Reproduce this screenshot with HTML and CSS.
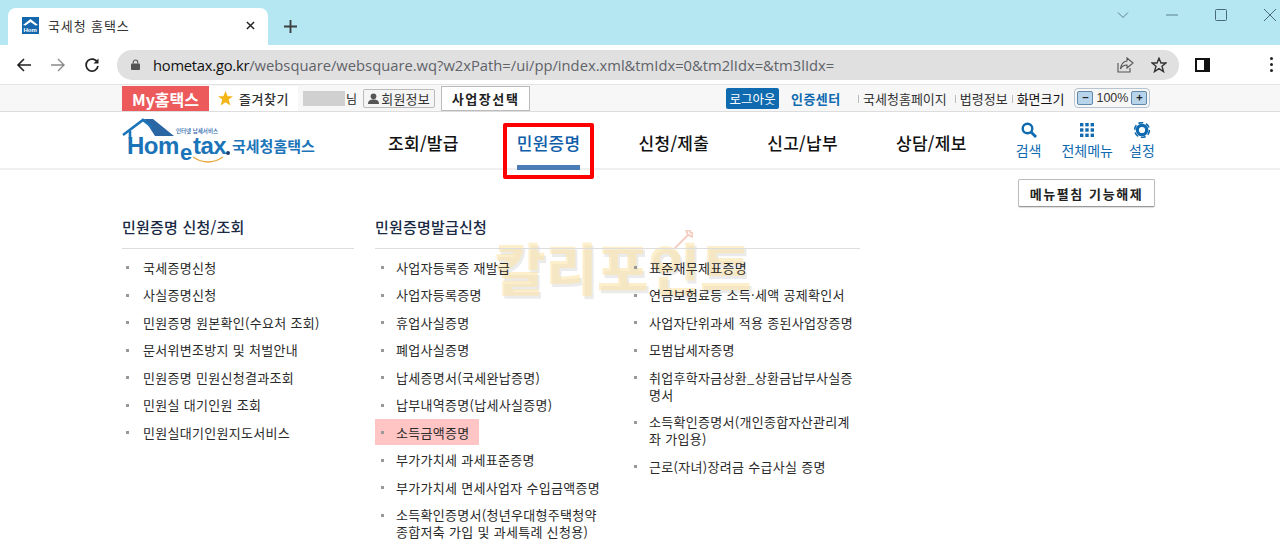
FILE: index.html
```html
<!DOCTYPE html>
<html lang="ko">
<head>
<meta charset="utf-8">
<title>국세청 홈택스</title>
<link rel="stylesheet" href="styles.css">
</head>
<body>
<div class="tabstrip">
  <div class="tab">
    <svg class="favicon" viewBox="0 0 17 17"><rect width="17" height="17" fill="#1467ad"/><path d="M1 8 8.5 2 16 8 13.5 8.5 8.5 5 3.5 8.5Z" fill="#fff"/><text x="1.5" y="14.5" class="fav-text">Hom</text></svg>
    <span class="tab-title">국세청 홈택스</span>
    <svg class="tab-close" viewBox="0 0 10 10"><path d="M1 1 9 9M9 1 1 9" stroke="#222" stroke-width="1.6"/></svg>
  </div>
  <svg class="tab-new" viewBox="0 0 14 14"><path d="M7 0V14M0 7H14" stroke="#3c4043" stroke-width="2"/></svg>
  <div class="win-controls">
    <svg class="win-ico" viewBox="0 0 12 12"><path d="M1 3.5 6 8.5 11 3.5" fill="none" stroke="#5f7f8c"/></svg>
    <svg class="win-ico" viewBox="0 0 12 12"><path d="M0 6H12" stroke="#5f7f8c"/></svg>
    <svg class="win-ico" viewBox="0 0 12 12"><rect x=".5" y=".5" width="11" height="11" rx="1" fill="none" stroke="#4a6a78"/></svg>
    <svg class="win-ico" viewBox="0 0 12 12"><path d="M0 0 12 12M12 0 0 12" stroke="#4a6a78"/></svg>
  </div>
</div>
<div class="toolbar">
  <svg class="tb-ico back" viewBox="0 0 16 16"><path d="M15 8H2M8 2 2 8 8 14" fill="none" stroke="#222" stroke-width="1.6"/></svg>
  <svg class="tb-ico fwd" viewBox="0 0 16 16"><path d="M1 8H14M8 2 14 8 8 14" fill="none" stroke="#8a8a8a" stroke-width="1.4"/></svg>
  <svg class="tb-ico reload" viewBox="0 0 16 16"><path d="M13.5 5.5A6 6 0 1 0 14 9" fill="none" stroke="#222" stroke-width="1.7"/><path d="M14.5 1.5V6.5H9.5Z" fill="#222"/></svg>
  <div class="omnibox">
    <svg class="lock" viewBox="0 0 10 12"><path d="M2.5 5V3.5a2.5 2.5 0 0 1 5 0V5" fill="none" stroke="#555" stroke-width="1.2"/><rect y="5" width="10" height="7" rx="1" fill="#555"/></svg>
    <span class="url"><span class="url-host">hometax.go.kr</span>/websquare/websquare.wq?w2xPath=/ui/pp/index.xml&amp;tmIdx=0&amp;tm2lIdx=&amp;tm3lIdx=</span>
    <svg class="share" viewBox="0 0 17 16"><path d="M1 6V15H13V11" fill="none" stroke="#555" stroke-width="1.1"/><path d="M10 1 16 6 10 11V8C7 8 5 9 3.5 12 4 8 6 4.5 10 4Z" fill="none" stroke="#555" stroke-width="1.1"/></svg>
    <svg class="star-o" viewBox="0 0 16 16"><path d="M8 1.2 10 6H15L11 9.2 12.5 14.6 8 11.6 3.5 14.6 5 9.2 1 6H6Z" fill="none" stroke="#333" stroke-width="1.4"/></svg>
  </div>
  <svg class="panel" viewBox="0 0 15 14"><rect x="1" y="1" width="13" height="12" fill="#fff" stroke="#111" stroke-width="2"/><rect x="9" y="1" width="5" height="12" fill="#111"/></svg>
  <div class="dots"><i></i><i></i><i></i></div>
</div>

<div class="page">
  <div class="topbar">
    <div class="my-tab">My홈택스</div>
    <div class="fav-tab"><svg class="fav-star" viewBox="0 0 14 14"><path d="M7 0 9 5H14L10 8 11.5 13.5 7 10.4 2.5 13.5 4 8 0 5H5Z" fill="#f5b417"/></svg>즐겨찾기</div>
    <div class="masked"></div>
    <span class="sir">님</span>
    <div class="member-btn"><svg class="person" viewBox="0 0 10 10"><circle cx="5" cy="3" r="2.6" fill="#555"/><path d="M0 10C0 7 2 6 5 6S10 7 10 10Z" fill="#555"/></svg>회원정보</div>
    <div class="biz-btn">사업장선택</div>
    <div class="logout">로그아웃</div>
    <a class="cert">인증센터</a>
    <span class="tlink first">국세청홈페이지</span>
    <span class="tlink">법령정보</span>
    <span class="tlink dark">화면크기</span>
    <div class="zoomer"><span class="zbtn">−</span><span class="zval">100%</span><span class="zbtn">+</span></div>
  </div>

  <header class="header">
    <svg class="logo" viewBox="0 0 200 56" aria-label="Hometax">
      <path d="M22 6H31L52 23H33Z" fill="#2a66a4"/>
      <path d="M1 22 21 7 30 14" fill="none" stroke="#1b74b8" stroke-width="2.6"/>
      <path d="M8 18V26" stroke="#1b74b8" stroke-width="2.6"/>
      <text x="54" y="20" class="logo-sub">인터넷 납세서비스</text>
      <text x="5" y="41" class="logo-main">Hom</text>
      <text x="58" y="47" class="logo-e">e</text>
      <text x="71" y="41" class="logo-main">tax</text>
      <circle cx="106" cy="40" r="2" fill="#1a3d73"/>
      <path d="M71 44Q86 54 101 44" fill="none" stroke="#e5a63a" stroke-width="1.3"/>
      <text x="110" y="39" class="logo-ko">국세청홈택스</text>
    </svg>
    <nav class="nav">
      <span class="nav-item">조회/발급</span>
      <span class="nav-item active">민원증명<i class="red-box"></i></span>
      <span class="nav-item">신청/제출</span>
      <span class="nav-item">신고/납부</span>
      <span class="nav-item">상담/제보</span>
    </nav>
    <div class="tools">
      <div class="tool t1">
        <svg class="tool-ico" viewBox="0 0 16 16"><circle cx="6.5" cy="6.5" r="4.8" fill="none" stroke="#0f6ab0" stroke-width="2.4"/><path d="M10 10 15 15" stroke="#0f6ab0" stroke-width="2.8"/></svg>
        <span>검색</span>
      </div>
      <div class="tool t2">
        <svg class="tool-ico" viewBox="0 0 16 16" fill="#0f6ab0"><rect x="1" y="1" width="3.4" height="3.4"/><rect x="6.3" y="1" width="3.4" height="3.4"/><rect x="11.6" y="1" width="3.4" height="3.4"/><rect x="1" y="6.3" width="3.4" height="3.4"/><rect x="6.3" y="6.3" width="3.4" height="3.4"/><rect x="11.6" y="6.3" width="3.4" height="3.4"/><rect x="1" y="11.6" width="3.4" height="3.4"/><rect x="6.3" y="11.6" width="3.4" height="3.4"/><rect x="11.6" y="11.6" width="3.4" height="3.4"/></svg>
        <span>전체메뉴</span>
      </div>
      <div class="tool t3">
        <svg class="tool-ico" viewBox="0 0 16 16"><circle cx="8" cy="8" r="7.4" fill="none" stroke="#0f6ab0" stroke-width="1.6" stroke-dasharray="5 2.75"/><circle cx="8" cy="8" r="4.7" fill="none" stroke="#0f6ab0" stroke-width="3.2"/></svg>
        <span>설정</span>
      </div>
    </div>
  </header>

  <main class="content">
    <div class="watermark">칼리포인트
      <svg class="wm-arrow" viewBox="0 0 24 24"><path d="M2 22 18 6M18 6 16 1 20 0 21 3 24 4 23 8 18 6Z" fill="none" stroke="#f3b9a8" stroke-width="2.4"/></svg>
    </div>
    <div class="action-row"><div class="collapse-btn">메뉴펼침 기능해제</div></div>
    <div class="menus">
      <section class="menu col-a">
        <h2 class="menu-title">민원증명 신청/조회</h2>
        <ul class="list">
          <li class="row"><span>국세증명신청</span></li>
          <li class="row"><span>사실증명신청</span></li>
          <li class="row"><span>민원증명 원본확인(수요처 조회)</span></li>
          <li class="row"><span>문서위변조방지 및 처벌안내</span></li>
          <li class="row"><span>민원증명 민원신청결과조회</span></li>
          <li class="row"><span>민원실 대기인원 조회</span></li>
          <li class="row"><span>민원실대기인원지도서비스</span></li>
        </ul>
      </section>
      <section class="menu col-b">
        <h2 class="menu-title">민원증명발급신청</h2>
        <div class="split">
          <ul class="list sub">
            <li class="row"><span>사업자등록증 재발급</span></li>
            <li class="row"><span>사업자등록증명</span></li>
            <li class="row"><span>휴업사실증명</span></li>
            <li class="row"><span>폐업사실증명</span></li>
            <li class="row"><span>납세증명서(국세완납증명)</span></li>
            <li class="row"><span>납부내역증명(납세사실증명)</span></li>
            <li class="row hl"><span>소득금액증명</span></li>
            <li class="row"><span>부가가치세 과세표준증명</span></li>
            <li class="row"><span>부가가치세 면세사업자 수입금액증명</span></li>
            <li class="row"><span>소득확인증명서(청년우대형주택청약<br>종합저축 가입 및 과세특례 신청용)</span></li>
          </ul>
          <ul class="list sub">
            <li class="row"><span>표준재무제표증명</span></li>
            <li class="row"><span>연금보험료등 소득·세액 공제확인서</span></li>
            <li class="row"><span>사업자단위과세 적용 종된사업장증명</span></li>
            <li class="row"><span>모범납세자증명</span></li>
            <li class="row"><span>취업후학자금상환_상환금납부사실증<br>명서</span></li>
            <li class="row"><span>소득확인증명서(개인종합자산관리계<br>좌 가입용)</span></li>
            <li class="row"><span>근로(자녀)장려금 수급사실 증명</span></li>
          </ul>
        </div>
      </section>
    </div>
  </main>
</div>
</body>
</html>
```
FILE: styles.css
```css
* { box-sizing: border-box; }
html, body { margin: 0; padding: 0; height: 558px; overflow: hidden; background: #fff; }
body { font-family: "Noto Sans CJK KR", "Noto Sans", sans-serif; color: #222; position: relative; }
ul { list-style: none; margin: 0; padding: 0; }
h2 { margin: 0; }

.tabstrip { height: 45px; background: #b5e7f3; display: flex; align-items: flex-end; padding-left: 8px; position: relative; }
.tab { width: 260px; height: 37px; background: #fff; border-radius: 8px 8px 0 0; display: flex; align-items: center; padding: 0 14px 2px; }
.favicon { width: 17px; height: 17px; margin-right: 9px; flex: none; }
.fav-text { font: 700 6px "Liberation Sans", sans-serif; fill: #fff; }
.tab-title { font-size: 13px; color: #333; letter-spacing: .9px; flex: 1; }
.tab-close { width: 9px; height: 9px; margin-right: -1px; }
.tab-new { width: 13px; height: 13px; margin: 0 0 12px 16px; }
.win-controls { margin-left: auto; display: flex; align-items: center; align-self: flex-start; gap: 37px; padding: 9px 4px 0 0; }
.win-ico { width: 12px; height: 12px; }

.toolbar { height: 39px; background: #fff; display: flex; align-items: center; padding-top: 4px; padding-bottom: 4px; position: relative; }
.tb-ico { width: 16px; height: 16px; flex: none; }
.back { margin-left: 16px; }
.fwd { margin-left: 18px; }
.reload { margin-left: 18px; margin-right: 17px; }
.omnibox { width: 1062px; height: 30px; background: #e0e0e0; border-radius: 15px; display: flex; align-items: center; padding: 0 12px 0 14px; flex: none; }
.lock { width: 9px; height: 11px; margin-right: 13px; }
.url { font-family: "Open Sans", "Liberation Sans", sans-serif; font-size: 14.75px; color: #5f6368; flex: 1; white-space: nowrap; }
.url-host { color: #111; letter-spacing: -.25px; }
.share { width: 17px; height: 16px; margin-right: 17px; }
.star-o { width: 16px; height: 16px; }
.panel { width: 15px; height: 14px; margin-left: 16px; flex: none; }
.dots { margin-left: 60px; display: flex; flex-direction: column; gap: 3px; flex: none; width: 3px; }
.dots i { width: 3px; height: 3px; border-radius: 50%; background: #222; display: block; }

.page { border-top: 1px solid #e3e3e3; }
.topbar { height: 27px; background: #f7f7f7; border-bottom: 1px solid #ddd; display: flex; align-items: center; padding-left: 122px; font-size: 13px; }
.my-tab { width: 87px; height: 25px; margin-top: 1px; background: #ec5a5c; color: #fff; font-weight: 700; font-size: 16px; display: flex; align-items: center; justify-content: center; }
.fav-tab { width: 89px; height: 25px; margin-top: 1px; background: #fff; display: flex; align-items: center; padding-left: 9px; font-weight: 500; color: #333; letter-spacing: .5px; }
.fav-star { width: 15px; height: 15px; margin-right: 6px; flex: none; }
.masked { width: 42px; height: 15px; background: #d0d0d0; margin-left: 5px; }
.sir { margin-left: 1px; font-size: 12px; }
.member-btn { width: 72px; height: 19px; margin-left: 6px; border: 1px solid #bbb; border-radius: 2px; background: #f5f5f5; display: flex; align-items: center; justify-content: center; letter-spacing: .2px; color: #333; }
.person { width: 11px; height: 11px; margin-right: 2px; flex: none; }
.biz-btn { width: 89px; height: 25px; margin-left: 6px; border: 1px solid #bbb; background: #fff; display: flex; align-items: center; justify-content: center; font-weight: 700; color: #222; letter-spacing: 1.6px; }
.logout { width: 53px; height: 21px; margin-left: 196px; background: #0f6ab0; border-radius: 2px; color: #fff; display: flex; align-items: center; justify-content: center; font-size: 12.5px; white-space: nowrap; }
.cert { margin-left: 12px; width: 50px; color: #0f6ab0; font-weight: 700; letter-spacing: .4px; white-space: nowrap; }
.tlink { color: #333; margin-left: 13px; position: relative; white-space: nowrap; }
.tlink.first { margin-left: 22px; }
.tlink.dark { margin-left: 9px; color: #111; }
.tlink::before { content: ""; position: absolute; left: -5px; top: 6px; width: 1px; height: 8px; background: #bbb; }
.zoomer { width: 76px; height: 20px; margin-left: 10px; border: 1px solid #b8c4d0; border-radius: 4px; display: flex; align-items: center; justify-content: space-between; padding: 0 2px; font-size: 12.5px; color: #333; }
.zbtn { width: 16px; height: 14px; background: #b8d4ea; border: 1px solid #5f88aa; border-radius: 2px; font-size: 11px; line-height: 11px; text-align: center; font-weight: 700; color: #222; }
.zval { font-family: "Liberation Sans", sans-serif; }

.header { height: 58px; border-bottom: 2px solid #efefef; display: flex; align-items: flex-start; padding-left: 122px; position: relative; }
.logo { width: 200px; height: 56px; margin-top: 1px; flex: none; }
.logo-main { font: 700 24px "Liberation Sans", sans-serif; fill: #1b74b8; letter-spacing: -.5px; }
.logo-e { font: 700 22px "Liberation Sans", sans-serif; fill: #1b74b8; }
.logo-ko { font: 700 15px "Noto Sans CJK KR", sans-serif; fill: #1b74b8; }
.logo-sub { font: 500 5.5px "Noto Sans CJK KR", sans-serif; fill: #1b5ea8; }
.nav { display: flex; gap: 58px; margin-left: 66px; padding-top: 19px; flex: none; }
.nav-item { font-size: 17px; font-weight: 500; color: #111; white-space: nowrap; position: relative; line-height: 24px; letter-spacing: .3px; }
.nav-item.active { color: #0f5ea8; }
.nav-item.active::after { content: ""; position: absolute; left: 0; top: 34px; width: 63px; height: 5px; background: #4a7db5; }
.red-box { position: absolute; left: -14px; top: -8px; width: 91px; height: 56px; border: 4px solid #f00; border-radius: 2px; z-index: 2; }
.tools { display: flex; margin-left: 49px; padding-top: 10px; color: #0f6ab0; font-size: 14px; }
.tool { display: flex; flex-direction: column; align-items: center; white-space: nowrap; line-height: 18px; }
.tool-ico { width: 16px; height: 16px; margin-bottom: 3px; }
.t2 { margin-left: 20px; }
.t3 { margin-left: 16px; }

.content { position: relative; padding-left: 122px; }
.action-row { display: flex; justify-content: flex-end; padding: 9px 125px 0 0; position: relative; }
.collapse-btn { width: 137px; height: 28px; border: 1px solid #bbb; border-bottom-color: #999; border-radius: 2px; background: #fff; display: flex; align-items: center; justify-content: center; font-size: 13px; font-weight: 700; color: #222; letter-spacing: 1.6px; box-shadow: 0 1px 1px #ddd; white-space: nowrap; }
.menus { display: flex; gap: 21px; padding-top: 8px; position: relative; }
.menu-title { height: 34px; font-size: 15px; font-weight: 500; line-height: 24px; color: #1a2a44; border-bottom: 1px solid #ddd; margin-bottom: 5px; letter-spacing: .2px; }
.col-a { width: 232px; }
.col-b { width: 485px; }
.split { display: flex; }
.sub { width: 253px; }
.sub + .sub { width: 232px; }
.row { display: flex; margin-bottom: 1.5px; font-size: 13px; line-height: 17px; color: #2a2a2a; }
.row > span { padding: 4.5px 9px 4.5px 21px; position: relative; white-space: nowrap; letter-spacing: .3px; }
.row > span::before { content: ""; position: absolute; left: 4px; top: 12px; width: 3px; height: 3px; background: #999; }
.col-b .row > span::before { left: 6px; }
.hl > span { background: #ffc4c4; }
.watermark { position: absolute; left: 494px; top: 65px; font-size: 56px; font-weight: 900; line-height: 62px; color: rgba(252, 228, 170, .6); text-shadow: 2px 3px 0 rgba(190, 190, 190, .3); white-space: nowrap; }
.wm-arrow { position: absolute; left: 179px; top: -5px; width: 20px; height: 20px; opacity: .7; }
```
